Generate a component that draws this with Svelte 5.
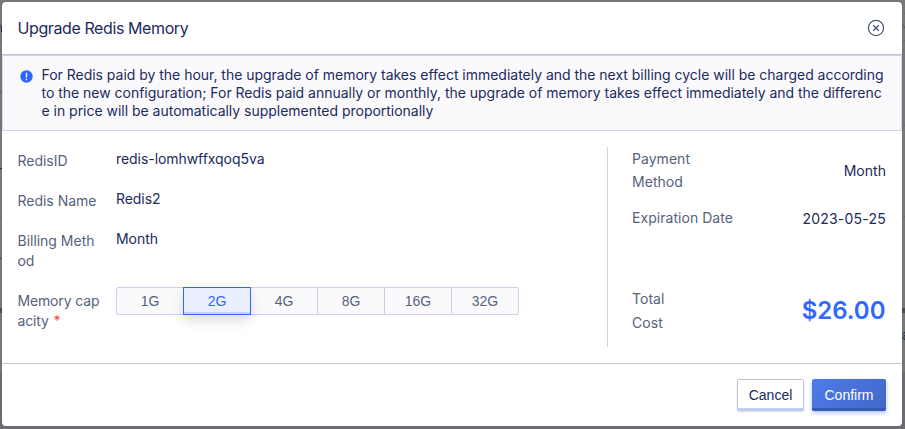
<script>
  const notice = [
    'For Redis paid by the hour, the upgrade of memory takes effect immediately and the next billing cycle will be charged according',
    'to the new configuration; For Redis paid annually or monthly, the upgrade of memory takes effect immediately and the differenc',
    'e in price will be automatically supplemented proportionally'
  ];
  const fields = [
    { label: 'RedisID', value: 'redis-lomhwffxqoq5va' },
    { label: 'Redis Name', value: 'Redis2' },
    { label: 'Billing Method', value: 'Month' }
  ];
  const sizes = ['1G', '2G', '4G', '8G', '16G', '32G'];
  let selected = $state('2G');
</script>

<div class="overlay">
  <svg class="backdrop" width="905" height="429" aria-hidden="true">
    <rect width="905" height="429" fill="#777778" />
    <rect y="372" width="905" height="57" fill="#6b6b70" />
    <path d="M0 40.5H2M0 125.5H2M0 216.5H2M902 13.5H905M902 40.5H905M902 125.5H905M902 216.5H905" stroke="#66666b" />
    <path d="M0 308H2V313H0ZM902 308H905V313H902Z" fill="#4c4c4f" />
    <path d="M0 25Q1.500 25 1.500 27V32M0 168.500H2M0 258.500H1" fill="none" stroke="#252b4c" />
    <path d="M0 91.500H2M902 24L905 28" fill="none" stroke="#56585f" />
    <path d="M902 334.500H903M902 338.500H903M905 332.500H904V334M905 335.500H904V339.500H905" fill="none" stroke="#25304e" />
  </svg>
  <div class="modal" role="dialog" aria-label="Upgrade Redis Memory">
    <header>
      <h1>Upgrade Redis Memory</h1>
      <button class="close" aria-label="Close">
        <svg width="18" height="18" viewBox="0 0 18 18" fill="none" stroke="#4b5b76">
          <circle cx="9" cy="9" r="7.600" stroke-width="1.300" />
          <path d="M6.200 6.200L11.800 11.800M11.800 6.200L6.200 11.800" stroke-width="1.400" />
        </svg>
      </button>
    </header>
    <div class="notice">
      <svg width="13" height="13" viewBox="0 0 13 13">
        <circle cx="6.500" cy="6.500" r="6.200" fill="#3067ff" />
        <path d="M6.500 2.800V7.500M6.500 8.800V10.200" stroke="#fff" stroke-width="1.300" />
      </svg>
      <p>{#each notice as line}<span>{line}</span>{/each}</p>
    </div>
    <div class="content">
      <section class="form">
        {#each fields as field}
          <div class="field">
            <span class="label">{field.label}</span>
            <span class="value">{field.value}</span>
          </div>
        {/each}
        <div class="field">
          <span class="label memory">Memory capacity <i>*</i></span>
          <div class="sizes">
            {#each sizes as size}
              <button class:active={selected === size} onclick={() => (selected = size)}>{size}</button>
            {/each}
          </div>
        </div>
      </section>
      <aside>
        <div class="row payment"><span class="name">Payment<br />Method</span><span class="data">Month</span></div>
        <div class="row expires"><span class="name">Expiration Date</span><span class="data">2023-05-25</span></div>
        <div class="row total"><span class="name">Total<br />Cost</span><strong>$26.00</strong></div>
      </aside>
    </div>
    <footer>
      <button class="cancel">Cancel</button>
      <button class="confirm">Confirm</button>
    </footer>
  </div>
</div>

<style>
  * { box-sizing: border-box; }
  .overlay { position: relative; width: 905px; height: 429px; padding: 2px 3px 3px 2px; overflow: hidden; font: 14px/20px Inter, sans-serif; letter-spacing: -.02px; color: #1c2a5e; }
  .backdrop { position: absolute; inset: 0; }
  .modal { position: relative; width: 900px; height: 424px; background: #fff; border-radius: 4px; display: flex; flex-direction: column; }
  header { height: 53px; flex: none; border-bottom: 1px solid #c1c4dc; display: flex; align-items: center; justify-content: space-between; padding: 0 17px 0 15.5px; }
  h1 { margin: 0; font-size: 16px; font-weight: 400; line-height: 24px; letter-spacing: -.4px; }
  button { font: 14px/20px "Liberation Sans", Arial, sans-serif; padding: 0; margin: 0; }
  .close { width: 18px; height: 18px; border: 0; background: none; }
  .close svg { display: block; }
  .notice { height: 76px; flex: none; display: flex; background: #fafafc; border: 1px solid #d0d3eb; padding: 10px 0 0 17px; }
  .notice svg { margin: 4px 8.5px 0 0; flex: none; }
  .notice p { margin: 0; line-height: 18px; white-space: nowrap; }
  .notice span { display: block; }
  .content { height: 232px; flex: none; display: flex; padding: 16px 16px 15px 15.5px; }
  .form { width: 589.5px; padding-top: 4px; }
  .field { display: flex; min-height: 20px; margin-bottom: 20px; }
  .label { width: 84px; margin-right: 14.5px; color: #56627b; word-break: break-all; flex: none; }
  .memory { letter-spacing: -.15px; }
  .value { margin-top: -2px; letter-spacing: -.06px; }
  i { color: #ff4230; font-style: normal; margin-left: 1px; }
  .sizes { display: flex; height: 28px; margin-top: -4px; }
  .sizes button { width: 68px; margin-right: -1px; border: 1px solid #cfd1eb; background: #fafafc; color: #56627b; }
  .sizes button:first-child { border-radius: 2px 0 0 2px; }
  .sizes button:last-child { border-radius: 0 2px 2px 0; }
  .sizes .active { position: relative; background: #e9effd; color: #3067ff; border-color: #3067ff; box-shadow: inset 0 -2px #c1d2fb, 0 6px 12px #0002; }
  aside { width: 279px; height: 200px; border-left: 1px solid #d2d3e5; padding-left: 24px; letter-spacing: .04px; }
  .row { display: flex; justify-content: space-between; align-items: center; }
  .name { color: #56627b; line-height: 23px; }
  .payment { height: 48px; }
  .expires { height: 24px; margin-top: 11px; }
  .total { height: 48px; margin-top: 57px; margin-bottom: 12px; }
  .total .name { line-height: 24px; }
  .payment .name { margin-top: -2px; }
  .expires .name { margin-top: -2px; }
  .expires .data { padding-top: 1px; letter-spacing: .22px; }
  strong { font-size: 24px; line-height: 32px; font-weight: 600; letter-spacing: 0; margin-right: .5px; color: #3067ff; }
  footer { flex: 1; border-top: 1px solid #c6c7d7; display: flex; justify-content: flex-end; gap: 8px; padding: 15px 16px 0 0; }
  footer button { height: 32px; border-radius: 2px; }
  .cancel { width: 67px; border: 1px solid #c2c5dc; color: #1c2a5e; background: #fff; box-shadow: inset 0 -2px #bfd1fa, 0 1px 2px #0002; }
  .confirm { width: 74px; border: 0; color: #fff; background: linear-gradient(135deg, #4f7bea, #4068c8); box-shadow: inset 0 -3px #385bb0, 0 2px 4px #3067ff66; }
</style>
